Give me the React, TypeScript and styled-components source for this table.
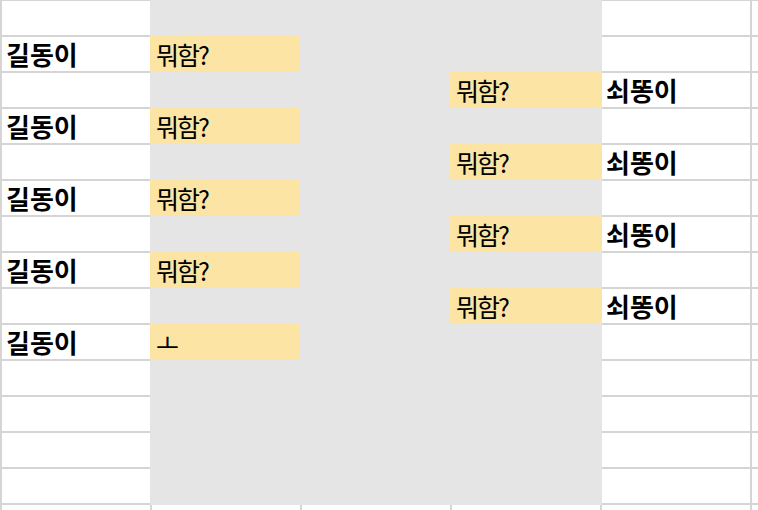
import React from "react";
import styled, { createGlobalStyle } from "styled-components";

const GlobalStyle = createGlobalStyle`
  html, body {
    margin: 0;
    padding: 0;
    background: #ffffff;
    overflow: hidden;
  }
  body {
    font-family: "Noto Sans CJK KR", "Noto Sans", sans-serif;
    color: #000;
  }
`;

const LINE = "#d5d5d5";
const GRAY = "#e5e5e5";
const YELLOW = "#fce5a4";

const Viewport = styled.div`
  width: 758px;
  height: 510px;
  overflow: hidden;
`;

const Sheet = styled.div`
  display: grid;
  grid-template-columns: repeat(5, 150px) 8px;
  grid-template-rows: repeat(14, 36px) 7px;
  margin-top: -1px;
`;

const Cell = styled.div<{ $col: number; $row: number; $bold?: boolean }>`
  grid-column: ${(p) => p.$col};
  grid-row: ${(p) => p.$row};
  box-sizing: border-box;
  border-left: 2px solid ${LINE};
  border-top: 2px solid ${LINE};
  background: #ffffff;
  display: flex;
  align-items: center;
  padding: 0 0 0 4px;
  font-size: 26px;
  line-height: 1;
  font-weight: ${(p) => (p.$bold ? 700 : 400)};
  white-space: nowrap;
  overflow: hidden;
`;

const Block = styled.div`
  grid-column: 2 / 5;
  grid-row: 1 / 15;
  margin-top: 1px;
  margin-right: -2px;
  margin-bottom: -2px;
  position: relative;
  z-index: 1;
  background: ${GRAY};
  display: grid;
  grid-template-columns: repeat(3, 150px) 2px;
  grid-template-rows: repeat(14, 36px);
  align-content: start;
`;

const Fill = styled.div<{ $col: number; $row: number }>`
  grid-column: ${(p) => p.$col} / span ${(p) => (p.$col === 3 ? 2 : 1)};
  grid-row: ${(p) => p.$row};
  background: ${YELLOW};
  display: flex;
  align-items: center;
  padding-left: 6px;
  font-size: 25px;
  letter-spacing: -2px;
  line-height: 1;
  font-weight: 400;
  white-space: nowrap;
`;

const leftRows: Record<number, string> = { 1: "길동이", 3: "길동이", 5: "길동이", 7: "길동이", 9: "길동이" };
const rightRows: Record<number, string> = { 2: "쇠똥이", 4: "쇠똥이", 6: "쇠똥이", 8: "쇠똥이" };
const yellowB: Record<number, string> = { 1: "뭐함?", 3: "뭐함?", 5: "뭐함?", 7: "뭐함?", 9: "ㅗ" };
const yellowD: Record<number, string> = { 2: "뭐함?", 4: "뭐함?", 6: "뭐함?", 8: "뭐함?" };

export default function App() {
  const rows = Array.from({ length: 15 }, (_, i) => i);
  return (
    <>
      <GlobalStyle />
      <Viewport>
        <Sheet>
          {rows.map((r) => (
            <Cell key={`a${r}`} $col={1} $row={r + 1} $bold>
              {leftRows[r] ?? ""}
            </Cell>
          ))}
          {[2, 3, 4].map((c) => (
            <Cell key={`b${c}`} $col={c} $row={15} />
          ))}
          {rows.map((r) => (
            <Cell key={`e${r}`} $col={5} $row={r + 1} $bold>
              {rightRows[r] ?? ""}
            </Cell>
          ))}
          {rows.map((r) => (
            <Cell key={`f${r}`} $col={6} $row={r + 1} />
          ))}
          <Block>
            {Object.entries(yellowB).map(([r, t]) => (
              <Fill key={`yb${r}`} $col={1} $row={Number(r) + 1}>
                {t}
              </Fill>
            ))}
            {Object.entries(yellowD).map(([r, t]) => (
              <Fill key={`yd${r}`} $col={3} $row={Number(r) + 1}>
                {t}
              </Fill>
            ))}
          </Block>
        </Sheet>
      </Viewport>
    </>
  );
}
